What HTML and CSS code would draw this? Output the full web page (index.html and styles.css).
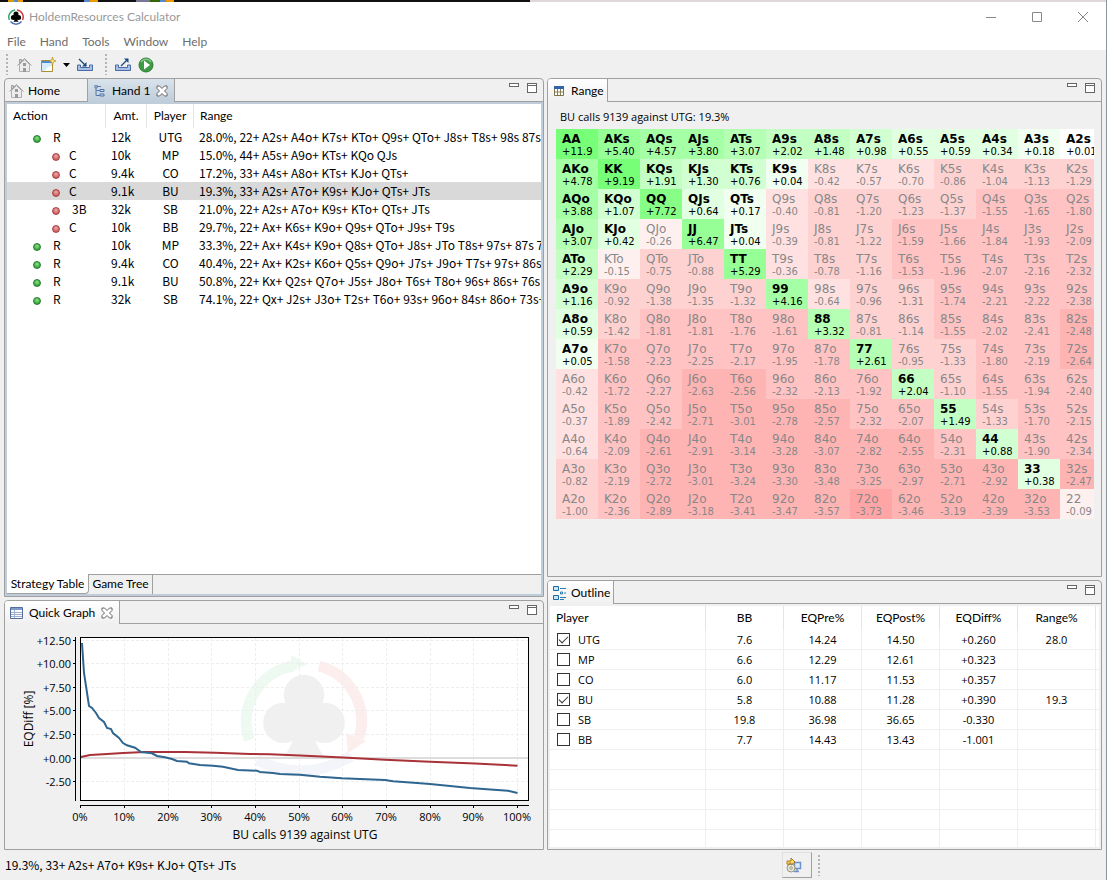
FILE: index.html
```html
<!DOCTYPE html>
<html lang="en">
<head>
    <meta charset="UTF-8">
    <title>HoldemResources Calculator</title>
    <link rel="stylesheet" href="styles.css">
</head>

<body>
<!-- Shared icons -->
<svg class="defs" aria-hidden="true">
    <defs>
        <symbol id="house" viewBox="0 0 16 16">
            <path d="M3.500 8V2.500h2V6" fill="#ccc" stroke="#a0a0a0"/>
            <path d="M3.500 7.500v7h10v-7l-5-5z" fill="#ececec" stroke="#b0b0b0"/>
            <path d="m1.500 8.500 7-7 7 7" fill="none" stroke="#a0a0a0"/>
            <path d="M7 6h3v3H7zM7 11h3v4H7z" fill="#9a9a9a"/>
        </symbol>
        <symbol id="close" viewBox="0 0 12 12">
            <path d="M1 1h2.500L6 3.500 8.500 1H11v2.500L8.500 6 11 8.500V11H8.500L6 8.500 3.500 11H1V8.500L3.500 6 1 3.500z" fill="#fff" stroke="#666"/>
        </symbol>
        <symbol id="tray" viewBox="0 0 18 14">
            <path d="M1.500 7v5.500h15V7h-3v2.500h-9V7z" fill="#a9c0e6" stroke="#4a6aa5"/>
        </symbol>
        <symbol id="club" viewBox="0 0 20 20">
            <circle cx="10" cy="5.200" r="4.200"/><circle cx="5.700" cy="11" r="4.200"/><circle cx="14.300" cy="11" r="4.200"/>
            <path d="M8.500 9h3q0 6 2.800 9H5.700q2.800-3 2.800-9z"/>
        </symbol>
    </defs>
</svg>

<div class="desktop-strip"></div>

<!-- Title bar -->
<header class="title-bar">
    <svg class="app-icon" viewBox="0 0 16 16">
        <path d="M1.500 11A7 7 0 0 1 7 1" fill="none" stroke="#35a872" stroke-width="1.500"/>
        <path d="M9 1a7 7 0 0 1 5.500 10" fill="none" stroke="#d43a3a" stroke-width="1.500"/>
        <path d="M13.500 12.500a7 7 0 0 1-11 0" fill="none" stroke="#5070b8" stroke-width="1.500"/>
        <use href="#club" x="2" y="2" width="12" height="12"/>
    </svg>
    <span class="app-title">HoldemResources Calculator</span>
    <button class="win-btn" aria-label="Minimize"><svg viewBox="0 0 12 12"><path d="M1 6.500h10"/></svg></button>
    <button class="win-btn" aria-label="Maximize"><svg viewBox="0 0 12 12"><path d="M1.500 1.500h9v9h-9z"/></svg></button>
    <button class="win-btn" aria-label="Close"><svg viewBox="0 0 12 12"><path d="m1 1 10 10M11 1 1 11"/></svg></button>
</header>

<nav class="menu-bar">
    <button>File</button>
    <button>Hand</button>
    <button>Tools</button>
    <button>Window</button>
    <button>Help</button>
</nav>

<!-- Toolbar -->
<div class="toolbar">
    <span class="grip"></span>
    <button class="tool home-tool" aria-label="Home"><svg width="16" height="16"><use href="#house"/></svg></button>
    <button class="tool new-tool" aria-label="New hand">
        <svg width="16" height="16" viewBox="0 0 16 16">
            <path d="M1.500 3.500h11v11h-11z" fill="#fff" stroke="#b08c30"/>
            <path d="M2 4h10v2H2z" fill="#4a8ad0"/>
            <path d="M2 6h10v3q-5 0-7 5H2z" fill="#d4ebfb"/>
            <path d="m12.500 0 1 3 2.500 1-2.500 1-1 3-1-3L9 4l2.500-1z" fill="#fbe27c" stroke="#b58e20" stroke-width=".7"/>
        </svg>
    </button>
    <button class="tool drop-tool" aria-label="New menu"><svg width="7" height="4" viewBox="0 0 7 4"><path d="M0 0h7L3.500 4z"/></svg></button>
    <button class="tool import-tool" aria-label="Import">
        <svg width="18" height="14" viewBox="0 0 18 14"><use href="#tray"/><path d="m3 1 7 7" stroke="#174b80" stroke-width="1.300"/><path d="M10.500 4v4.500H6z" fill="#174b80"/></svg>
    </button>
    <span class="grip"></span>
    <button class="tool export-tool" aria-label="Export">
        <svg width="18" height="14" viewBox="0 0 18 14"><use href="#tray"/><path d="m7 8 6-6" stroke="#174b80" stroke-width="1.300"/><path d="M10 .5h4.500V5z" fill="#174b80"/></svg>
    </button>
    <button class="tool" aria-label="Run">
        <svg width="16" height="16" viewBox="0 0 16 16"><circle cx="8" cy="8" r="7" fill="#3f9a45" stroke="#2c7d35"/><path d="M3 5a6 6 0 0 1 10 0" fill="none" stroke="#85c585" stroke-width="1.500"/><path d="M6 3.500v9L12 8z" fill="#fff"/></svg>
    </button>
</div>

<main class="workbench">
    <div class="column">

        <!-- Strategy table -->
        <section class="panel panel-hand">
            <div class="tabs">
                <button class="tab tab-home"><svg width="16" height="16"><use href="#house"/></svg>Home</button>
                <button class="tab tab-hand">
                    <svg width="12" height="12" viewBox="0 0 12 12"><path d="M1 0h2v3H1zM2 3v7.500h4M2 5.500h4M3 1.500h4" fill="none" stroke="#5879a8"/><path d="M6 4.500h4v2H6zM6 9h4v2H6z" fill="#c8dcf4" stroke="#4e75a9"/></svg>
                    Hand 1
                    <svg width="12" height="12"><use href="#close"/></svg>
                </button>
                <div class="panel-tools">
                    <button class="min-btn" aria-label="Minimize view"></button>
                    <button class="max-btn" aria-label="Maximize view"></button>
                </div>
            </div>
            <div class="hand-body">
                <table class="strategy">
                    <colgroup><col class="c-action"><col class="c-amt"><col class="c-player"><col></colgroup>
                    <thead>
                        <tr><th>Action</th><th>Amt.</th><th>Player</th><th>Range</th></tr>
                    </thead>
                    <tbody>
                        <tr><td class="raise"><i></i>R</td><td>12k</td><td>UTG</td><td>28.0%, 22+ A2s+ A4o+ K7s+ KTo+ Q9s+ QTo+ J8s+ T8s+ 98s 87s</td></tr>
                        <tr><td class="call"><i></i>C</td><td>10k</td><td>MP</td><td>15.0%, 44+ A5s+ A9o+ KTs+ KQo QJs</td></tr>
                        <tr><td class="call"><i></i>C</td><td>9.4k</td><td>CO</td><td>17.2%, 33+ A4s+ A8o+ KTs+ KJo+ QTs+</td></tr>
                        <tr class="selected"><td class="call"><i></i>C</td><td>9.1k</td><td>BU</td><td>19.3%, 33+ A2s+ A7o+ K9s+ KJo+ QTs+ JTs</td></tr>
                        <tr><td class="call reraise"><i></i>3B</td><td>32k</td><td>SB</td><td>21.0%, 22+ A2s+ A7o+ K9s+ KTo+ QTs+ JTs</td></tr>
                        <tr><td class="call"><i></i>C</td><td>10k</td><td>BB</td><td>29.7%, 22+ Ax+ K6s+ K9o+ Q9s+ QTo+ J9s+ T9s</td></tr>
                        <tr><td class="raise"><i></i>R</td><td>10k</td><td>MP</td><td>33.3%, 22+ Ax+ K4s+ K9o+ Q8s+ QTo+ J8s+ JTo T8s+ 97s+ 87s 76</td></tr>
                        <tr><td class="raise"><i></i>R</td><td>9.4k</td><td>CO</td><td>40.4%, 22+ Ax+ K2s+ K6o+ Q5s+ Q9o+ J7s+ J9o+ T7s+ 97s+ 86s+</td></tr>
                        <tr><td class="raise"><i></i>R</td><td>9.1k</td><td>BU</td><td>50.8%, 22+ Kx+ Q2s+ Q7o+ J5s+ J8o+ T6s+ T8o+ 96s+ 86s+ 76s 6</td></tr>
                        <tr><td class="raise"><i></i>R</td><td>32k</td><td>SB</td><td>74.1%, 22+ Qx+ J2s+ J3o+ T2s+ T6o+ 93s+ 96o+ 84s+ 86o+ 73s+</td></tr>
                    </tbody>
                </table>
                <div class="bottom-tabs">
                    <button class="on">Strategy Table</button>
                    <button>Game Tree</button>
                </div>
            </div>
        </section>

        <!-- Quick graph -->
        <section class="panel panel-graph">
            <div class="tabs">
                <button class="tab tab-on tab-graph">
                    <svg width="13" height="12" viewBox="0 0 13 12"><path d="M.5.5h12v11H.5z" fill="#fff" stroke="#536d9c"/><path d="M1 1h11v2H1z" fill="#7e9acb"/><path d="M1 5.500h11M1 7.500h11M1 9.500h11M4.500 3v8" stroke="#9fb1cf"/></svg>
                    Quick Graph
                    <svg width="12" height="12"><use href="#close"/></svg>
                </button>
                <div class="panel-tools">
                    <button class="min-btn" aria-label="Minimize view"></button>
                    <button class="max-btn" aria-label="Maximize view"></button>
                </div>
            </div>
            <svg class="graph" viewBox="0 0 538 225">
                <rect x="75.500" y="13.500" width="448" height="163" fill="#fff"/>
                <!-- watermark -->
                <g fill="none" stroke-width="11">
                    <path d="M244 116A57 57 0 0 1 288 42" stroke="#eef9f2"/>
                    <path d="M314 42A57 57 0 0 1 354 114" stroke="#fdeeee"/>
                    <path d="M252 136Q300 160 346 132" stroke="#f3f5fb"/>
                </g>
                <path d="M286 31v17l16-8z" fill="#eef9f2"/>
                <path d="m341 109 20 8-18 12z" fill="#fdeeee"/>
                <use href="#club" x="246" y="46" width="106" height="96" fill="#f0f0f0"/>
                <g class="grid-lines">
                    <path d="M76 16.500h447M76 39.500h447M76 63.500h447M76 86.500h447M76 110.500h447M76 157.500h447"/>
                    <path d="M119.500 14v162M163.500 14v162M206.500 14v162M250.500 14v162M294.500 14v162M337.500 14v162M381.500 14v162M425.500 14v162M468.500 14v162M512.500 14v162"/>
                </g>
                <path d="M76 134h447" stroke="#ddd" stroke-width="2"/>
                <polyline class="line-red" points="76,133 85,131 102,130 118,129 140,128 180,128 210,128.700 245,130 265,130.300 295,131.500 338,133.500 380,135.700 425,137.700 470,139.500 512.500,141.700"/>
                <polyline class="line-blue" points="77,19 79,49 84,82 87,84 91,89 94,94 99,98 102,104 106,105 108,109 114,114 118,119 122,121.300 130,123.700 136,128 147,129.300 152,132 160,133.300 167,135 172,137 182,137.700 184,139.300 195,141 208,141.700 218,142.700 233,146 252,146.700 255,148 268,149 275,150 295,150.700 315,152.700 337,154.300 355,155 380,156 388,157.300 412,159 425,160 445,162 465,164 482,165.300 503,166.700 512.500,169"/>
                <rect x="75.500" y="13.500" width="448" height="163" fill="none" stroke="#000"/>
                <path class="axis" d="M70.500 13v164M68 16.500h3M68 39.500h3M68 63.500h3M68 86.500h3M68 110.500h3M68 134.500h3M68 157.500h3"/>
                <path class="axis" d="M75 181.500h449M75.500 181v3M119.500 181v3M163.500 181v3M206.500 181v3M250.500 181v3M294.500 181v3M337.500 181v3M381.500 181v3M425.500 181v3M468.500 181v3M512.500 181v3"/>
                <g class="y-labels">
                    <text x="66" y="21">+12.50</text>
                    <text x="66" y="44">+10.00</text>
                    <text x="66" y="68">+7.50</text>
                    <text x="66" y="91">+5.00</text>
                    <text x="66" y="115">+2.50</text>
                    <text x="66" y="139">+0.00</text>
                    <text x="66" y="162">-2.50</text>
                </g>
                <g class="x-labels">
                    <text x="75" y="197">0%</text>
                    <text x="119" y="197">10%</text>
                    <text x="163" y="197">20%</text>
                    <text x="206" y="197">30%</text>
                    <text x="250" y="197">40%</text>
                    <text x="294" y="197">50%</text>
                    <text x="337" y="197">60%</text>
                    <text x="381" y="197">70%</text>
                    <text x="425" y="197">80%</text>
                    <text x="468" y="197">90%</text>
                    <text x="512" y="197">100%</text>
                </g>
                <text class="axis-title" x="300" y="215">BU calls 9139 against UTG</text>
                <text class="axis-title" transform="translate(28 95) rotate(-90)">EQDiff [%]</text>
            </svg>
        </section>
    </div>

    <div class="column">

        <!-- Range grid -->
        <section class="panel panel-range">
            <div class="tabs">
                <button class="tab tab-on tab-range">
                    <svg width="10" height="10" viewBox="0 0 10 10"><path d="M.5.5h9v9h-9z" fill="#fff" stroke="#7d7346"/><path d="M0 0h10v3H0z" fill="#2f64a8"/><path d="M1 6h8M3.500 3v6M6.500 3v6" stroke="#8b8358"/></svg>
                    Range
                </button>
                <div class="panel-tools">
                    <button class="min-btn" aria-label="Minimize view"></button>
                    <button class="max-btn" aria-label="Maximize view"></button>
                </div>
            </div>
            <p class="range-title">BU calls 9139 against UTG: 19.3%</p>
            <div class="range-grid" id="range-grid"></div>
        </section>

        <!-- Outline -->
        <section class="panel panel-outline">
            <div class="tabs">
                <button class="tab tab-on tab-outline">
                    <svg width="14" height="16" viewBox="0 0 14 16"><path d="M.5 1.500h5v4h-5zM.5 10.500h5v4h-5z" fill="#c9e6fa" stroke="#1c68a4"/><path d="M7 3.500h6M7 12.500h6M7 14.500h4M7.500 7h2v2h-2zM11 8h2" fill="none" stroke="#2e7ab3"/></svg>
                    Outline
                </button>
                <div class="panel-tools">
                    <button class="min-btn" aria-label="Minimize view"></button>
                    <button class="max-btn" aria-label="Maximize view"></button>
                </div>
            </div>
            <div class="outline-body">
                <table class="outline">
                    <colgroup><col><col class="c-num"><col class="c-num"><col class="c-num"><col class="c-num"><col class="c-num"><col class="c-end"></colgroup>
                    <thead>
                        <tr><th>Player</th><th>BB</th><th>EQPre%</th><th>EQPost%</th><th>EQDiff%</th><th>Range%</th><th></th></tr>
                    </thead>
                    <tbody>
                        <tr><td><label><input type="checkbox" checked>UTG</label></td><td>7.6</td><td>14.24</td><td>14.50</td><td>+0.260</td><td>28.0</td><td></td></tr>
                        <tr><td><label><input type="checkbox">MP</label></td><td>6.6</td><td>12.29</td><td>12.61</td><td>+0.323</td><td></td><td></td></tr>
                        <tr><td><label><input type="checkbox">CO</label></td><td>6.0</td><td>11.17</td><td>11.53</td><td>+0.357</td><td></td><td></td></tr>
                        <tr><td><label><input type="checkbox" checked>BU</label></td><td>5.8</td><td>10.88</td><td>11.28</td><td>+0.390</td><td>19.3</td><td></td></tr>
                        <tr><td><label><input type="checkbox">SB</label></td><td>19.8</td><td>36.98</td><td>36.65</td><td>-0.330</td><td></td><td></td></tr>
                        <tr><td><label><input type="checkbox">BB</label></td><td>7.7</td><td>14.43</td><td>13.43</td><td>-1.001</td><td></td><td></td></tr>
                        <tr><td></td><td></td><td></td><td></td><td></td><td></td><td></td></tr>
                        <tr><td></td><td></td><td></td><td></td><td></td><td></td><td></td></tr>
                        <tr><td></td><td></td><td></td><td></td><td></td><td></td><td></td></tr>
                        <tr><td></td><td></td><td></td><td></td><td></td><td></td><td></td></tr>
                        <tr><td></td><td></td><td></td><td></td><td></td><td></td><td></td></tr>
                    </tbody>
                </table>
            </div>
        </section>
    </div>
</main>

<!-- Status bar -->
<footer class="status-bar">
    <span class="status-text">19.3%, 33+ A2s+ A7o+ K9s+ KJo+ QTs+ JTs</span>
    <div class="status-tools">
        <button class="update-btn" aria-label="Updates">
            <svg width="16" height="16" viewBox="0 0 16 16"><path d="M8.500 5.500h6v6h-6z" fill="#dcecff" stroke="#6d91cb" stroke-width="1.500"/><path d="M8 14.500h5M11 12v2" stroke="#6d91cb" stroke-width="1.500"/><circle cx="5" cy="11" r="4" fill="#e8e8da" stroke="#98977c"/><circle cx="5" cy="11" r="1.300" fill="#fff" stroke="#98977c"/><path d="M1 7V4h4V1l4 4-4 3V6H3v2z" fill="#ffd968" stroke="#a8791c"/></svg>
        </button>
        <span class="grip"></span>
    </div>
</footer>

<script src="script.js"></script>
</body>
</html>
```

FILE: styles.css
```css
* {
    box-sizing: border-box;
}
body {
    margin: 0;
    height: 100vh;
    display: flex;
    flex-direction: column;
    overflow: hidden;
    background: #f0f0f0;
    border-right: 1px solid #8a959c;
    font-family: Lato, "Open Sans", sans-serif;
    font-size: 12px;
    line-height: 16px;
    color: #000;
}
button {
    font: inherit;
    color: inherit;
    background: none;
    border: none;
    padding: 0;
}
svg {
    display: block;
    flex: none;
}
.defs {
    position: absolute;
    width: 0;
    height: 0;
}

/* title, menu, toolbar */
.desktop-strip {
    height: 2px;
    flex: none;
    background: linear-gradient(90deg, #111 8px, #d90 8px 14px, #58c 14px 18px, #e90 18px 23px, #111 23px 84px, #58c 84px 90px, #e90 90px 98px, #111 98px 136px, #779 136px 150px, #360 150px 160px, #58c 160px 166px, #e90 166px 174px, #111 174px 530px, #e0d8d8 530px);
}
.title-bar {
    display: flex;
    align-items: center;
    height: 30px;
    flex: none;
    padding-left: 8px;
    background: #fff;
    color: #999;
}
.app-icon {
    width: 16px;
    height: 16px;
}
.app-title {
    flex: 1;
    margin-left: 5px;
}
.win-btn {
    width: 46px;
    height: 30px;
    display: flex;
    align-items: center;
    justify-content: center;
}
.win-btn svg {
    width: 12px;
    height: 12px;
    fill: none;
    stroke: #888;
}
.menu-bar {
    display: flex;
    gap: 14px;
    height: 18px;
    flex: none;
    padding: 1px 7px 0;
    background: #fff;
    color: #6d6d6d;
}
.menu-bar button {
    height: 17px;
}
.toolbar {
    display: flex;
    align-items: center;
    height: 28px;
    flex: none;
    padding: 1px 0 0 6px;
}
.grip {
    width: 2px;
    height: 21px;
    background: repeating-linear-gradient(#b4b4b4 0 2px, transparent 2px 4px);
}
.home-tool {
    margin-left: 8px;
}
.new-tool {
    margin-left: 8px;
}
.drop-tool {
    margin-left: 7px;
}
.import-tool {
    margin: 0 11px 0 6px;
}
.export-tool {
    margin: 0 6px 0 7px;
}

/* panels */
.workbench {
    flex: 1;
    min-height: 0;
    display: grid;
    grid-template-columns: 540fr 555fr;
    gap: 3px;
    padding: 0 4px;
}
.column {
    display: flex;
    flex-direction: column;
    gap: 3px;
    min-width: 0;
    min-height: 0;
}
.panel {
    display: flex;
    flex-direction: column;
    min-height: 0;
    border: 1px solid #a0a0a0;
    border-radius: 4px 4px 0 0;
    overflow: hidden;
}
.panel-hand {
    flex: 517 1 0;
}
.panel-graph {
    flex: 248 1 0;
}
.panel-range {
    flex: 497 1 0;
}
.panel-outline {
    flex: 268 1 0;
}
.tabs {
    display: flex;
    height: 23px;
    flex: none;
    box-shadow: inset 0 -1px #a0a0a0;
}
.tab {
    display: flex;
    align-items: center;
    border-right: 1px solid #a0a0a0;
}
.tab-on {
    background: linear-gradient(#fff, #f0f0f0);
}
.tab-home {
    width: 83px;
    gap: 4px;
    padding-left: 3px;
    box-shadow: inset 0 -1px #a0a0a0;
}
.tab-hand {
    width: 87px;
    gap: 6px;
    padding-left: 6px;
    background: linear-gradient(#dae3ec, #bfccda);
}
.tab-graph {
    width: 115px;
    gap: 6px;
    padding-left: 5px;
}
.tab-range {
    width: 60px;
    gap: 7px;
    padding-left: 6px;
}
.tab-outline {
    width: 66px;
    gap: 4px;
    padding-left: 5px;
}
.panel-tools {
    display: flex;
    gap: 8px;
    margin-left: auto;
    padding: 4px 6px 0 0;
}
.min-btn {
    width: 10px;
    height: 4px;
    background: #fff;
    border: 1px solid #666;
}
.max-btn {
    width: 10px;
    height: 10px;
    background: linear-gradient(#fff 1px, #666 1px 2px, #fff 2px);
    border: 1px solid #666;
}

/* strategy table */
.hand-body {
    flex: 1;
    min-height: 0;
    display: flex;
    flex-direction: column;
    justify-content: space-between;
    border: 2px solid #bfccda;
    background: #fff;
}
table {
    width: 100%;
    table-layout: fixed;
    border-collapse: separate;
    border-spacing: 0;
}
th {
    font-weight: normal;
}
th, td {
    padding: 0;
    white-space: nowrap;
    overflow: hidden;
}
.c-action {
    width: 99px;
}
.c-amt {
    width: 41px;
}
.c-player {
    width: 47px;
}
.strategy th {
    height: 24px;
    border-right: 1px solid #e5e5e5;
}
.strategy th:first-child {
    text-align: left;
    padding-left: 6px;
}
.strategy th:last-child {
    text-align: left;
    padding-left: 6px;
    border-right: none;
}
.strategy td {
    height: 18px;
}
.strategy td, .status-text {
    font-family: "Noto Sans CJK SC", "Open Sans", sans-serif;
}
.strategy td:nth-child(2) {
    padding-left: 5px;
}
.strategy td:nth-child(3) {
    text-align: center;
}
.strategy td:nth-child(4) {
    padding-left: 5px;
}
.strategy i {
    display: inline-block;
    width: 8px;
    height: 8px;
    margin-right: 12px;
    border-radius: 50%;
    border: 1px solid #237a2a;
    background: radial-gradient(circle at 50% 35%, #8fe08a, #35a83a 70%);
    vertical-align: -1px;
}
.strategy .raise {
    padding-left: 26px;
}
.strategy .call {
    padding-left: 45px;
}
.call i {
    margin-right: 9px;
    border-color: #a04040;
    background: radial-gradient(circle at 50% 35%, #f0a8a8, #d06060 70%);
}
.strategy .reraise i {
    margin-right: 12px;
}
.strategy .call:not(.reraise) i {
    margin-right: 9px;
}
.selected {
    background: #d9d9d9;
}
.bottom-tabs {
    display: flex;
    height: 20px;
    background: linear-gradient(#a0a0a0 1px, #f0f0f0 1px);
}
.bottom-tabs button {
    width: 64px;
    border-right: 1px solid #a0a0a0;
}
.bottom-tabs .on {
    width: 82px;
    background: #fff;
    border-bottom: 1px solid #a0a0a0;
    border-radius: 0 0 4px 0;
}

/* graph */
.graph {
    width: 100%;
    font-family: "Open Sans", sans-serif;
    font-size: 11px;
}
.grid-lines {
    stroke: #eee;
    stroke-dasharray: 3 2;
}
.axis {
    stroke: #000;
}
.line-red, .line-blue {
    fill: none;
    stroke-width: 2;
}
.line-red {
    stroke: #a83238;
}
.line-blue {
    stroke: #2f6690;
}
.y-labels {
    text-anchor: end;
}
.x-labels, .axis-title {
    text-anchor: middle;
}
.axis-title {
    font-size: 12px;
}

/* range grid */
.range-title {
    margin: 7px 12px 4px;
    font-family: "Open Sans", sans-serif;
    font-size: 11px;
}
.range-grid {
    display: grid;
    grid-template-columns: repeat(13, 42px);
    grid-auto-rows: 30px;
    margin: 0 7px 0 8px;
    overflow: hidden;
    font-family: "DejaVu Sans", Verdana, sans-serif;
}
.cell {
    padding: 3px 0 0 6px;
    color: #888;
    font-size: 10px;
    line-height: 12px;
}
.cell b {
    display: block;
    height: 14px;
    font-size: 12px;
    font-weight: normal;
    line-height: 14px;
}
.in-range {
    color: #000;
}
.in-range b {
    font-weight: bold;
}

/* outline table */
.outline-body {
    flex: 1;
    min-height: 0;
    margin: 2px;
    overflow: hidden;
    background: #fff;
}
.c-num {
    width: 78px;
}
.c-end {
    width: 3px;
}
.outline th {
    height: 24px;
    border-right: 1px solid #e5e5e5;
}
.outline th:first-child {
    text-align: left;
    padding-left: 6px;
}
.outline td {
    height: 20px;
    text-align: center;
    font-family: "Open Sans", sans-serif;
    font-size: 11px;
    border-right: 1px solid #ebeef5;
    border-bottom: 1px solid #f0f0f0;
}
.outline td:first-child {
    text-align: left;
    padding-left: 7px;
}
.outline th:last-child, .outline td:last-child {
    border-right: none;
}
.outline label {
    display: flex;
    align-items: center;
    gap: 8px;
}
.outline input {
    appearance: none;
    width: 13px;
    height: 13px;
    margin: 0;
    border: 1px solid #333;
    background: #fff;
}
.outline input:checked::after {
    content: "";
    display: block;
    width: 8px;
    height: 4px;
    margin: 2px 1px;
    border-left: 1px solid #333;
    border-bottom: 1px solid #333;
    transform: rotate(-45deg);
}

/* status bar */
.status-bar {
    display: flex;
    align-items: center;
    height: 30px;
    flex: none;
    padding-left: 5px;
}
.status-text {
    flex: 777;
}
.status-tools {
    flex: 324;
    display: flex;
    align-items: center;
    gap: 6px;
}
.update-btn {
    width: 30px;
    height: 26px;
    padding-left: 3px;
    border: 1px solid #e0e0e0;
    border-right-color: #a0a0a0;
    border-bottom-color: #a0a0a0;
}
```

FILE: script.js
```js
const ranks = "AKQJT98765432";

// EV of calling for every starting hand, suited above the diagonal
const values = [
    [11.9, 5.40, 4.57, 3.80, 3.07, 2.02, 1.48, 0.98, 0.55, 0.59, 0.34, 0.18, 0.01],
    [4.78, 9.19, 1.91, 1.30, 0.76, 0.04, -0.42, -0.57, -0.70, -0.86, -1.04, -1.13, -1.29],
    [3.88, 1.07, 7.72, 0.64, 0.17, -0.40, -0.81, -1.20, -1.23, -1.37, -1.55, -1.65, -1.80],
    [3.07, 0.42, -0.26, 6.47, 0.04, -0.39, -0.81, -1.22, -1.59, -1.66, -1.84, -1.93, -2.09],
    [2.29, -0.15, -0.75, -0.88, 5.29, -0.36, -0.78, -1.16, -1.53, -1.96, -2.07, -2.16, -2.32],
    [1.16, -0.92, -1.38, -1.35, -1.32, 4.16, -0.64, -0.96, -1.31, -1.74, -2.21, -2.22, -2.38],
    [0.59, -1.42, -1.81, -1.81, -1.76, -1.61, 3.32, -0.81, -1.14, -1.55, -2.02, -2.41, -2.48],
    [0.05, -1.58, -2.23, -2.25, -2.17, -1.95, -1.78, 2.61, -0.95, -1.33, -1.80, -2.19, -2.64],
    [-0.42, -1.72, -2.27, -2.63, -2.56, -2.32, -2.13, -1.92, 2.04, -1.10, -1.55, -1.94, -2.40],
    [-0.37, -1.89, -2.42, -2.71, -3.01, -2.78, -2.57, -2.32, -2.07, 1.49, -1.33, -1.70, -2.15],
    [-0.64, -2.09, -2.61, -2.91, -3.14, -3.28, -3.07, -2.82, -2.55, -2.31, 0.88, -1.90, -2.34],
    [-0.82, -2.19, -2.72, -3.01, -3.24, -3.30, -3.48, -3.25, -2.97, -2.71, -2.92, 0.38, -2.47],
    [-1.00, -2.36, -2.89, -3.18, -3.41, -3.47, -3.57, -3.73, -3.46, -3.19, -3.39, -3.53, -0.09]
];

// each limit passed makes the cell one shade stronger
const limits = [0.02, 0.28, 0.73, 1.45, 2.45, 3.65, 5, 7, 8.5];

function cellColor(value) {
    const level = limits.filter(limit => Math.abs(value) > limit).length;
    const c = 255 - level * 15;
    return value > 0 ? `rgb(${c}, 255, ${c})` : `rgb(255, ${c}, ${c})`;
}

function handName(row, col) {
    if (row === col) return ranks[row] + ranks[col];
    return row < col ? ranks[row] + ranks[col] + "s" : ranks[col] + ranks[row] + "o";
}

const grid = document.getElementById("range-grid");
values.forEach((line, row) => {
    line.forEach((value, col) => {
        const cell = document.createElement("div");
        cell.className = value > 0 ? "cell in-range" : "cell";
        cell.style.background = cellColor(value);
        const name = document.createElement("b");
        name.textContent = handName(row, col);
        cell.append(name, (value > 0 ? "+" : "") + value.toFixed(value >= 10 ? 1 : 2));
        grid.appendChild(cell);
    });
});
```
